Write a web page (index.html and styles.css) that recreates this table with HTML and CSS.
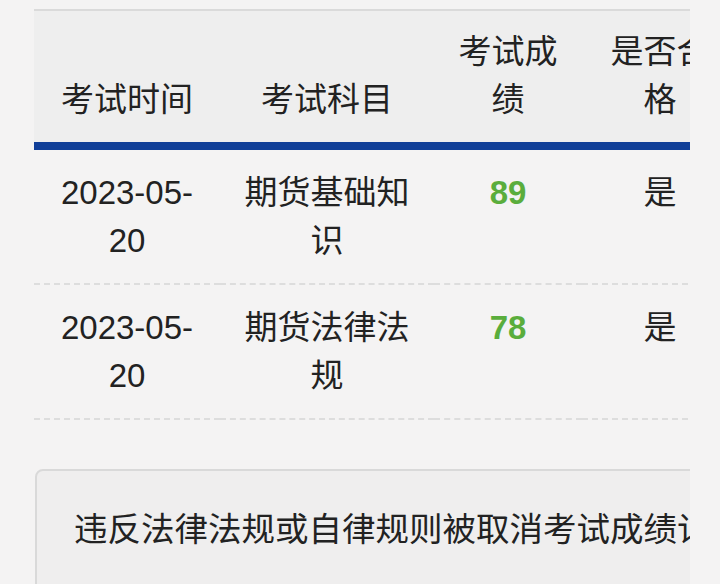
FILE: index.html
```html
<!DOCTYPE html>
<html lang="zh">
<head>
<meta charset="utf-8">
<link rel="stylesheet" href="styles.css">
</head>
<body>
<div class="wrap">
  <table class="scores">
    <colgroup>
      <col class="c1"><col class="c2"><col class="c3"><col class="c4">
    </colgroup>
    <thead>
      <tr>
        <th>考试时间</th>
        <th>考试科目</th>
        <th>考试成绩</th>
        <th>是否合格</th>
      </tr>
    </thead>
    <tbody>
      <tr>
        <td>2023-05-20</td>
        <td>期货基础知识</td>
        <td class="score">89</td>
        <td>是</td>
      </tr>
      <tr>
        <td>2023-05-20</td>
        <td>期货法律法规</td>
        <td class="score">78</td>
        <td>是</td>
      </tr>
    </tbody>
  </table>
  <div class="notice">违反法律法规或自律规则被取消考试成绩记录</div>
</div>
</body>
</html>
```
FILE: styles.css
```css
html, body {
  margin: 0;
  background: #f4f3f3;
}
body {
  font-family: "Liberation Sans", "Noto Sans CJK SC", sans-serif;
  color: #222222;
  font-size: 33px;
  line-height: 48px;
}
.wrap {
  margin-left: 34px;
  width: 656px;
  height: 584px;
  padding-top: 9px;
  box-sizing: border-box;
  overflow: hidden;
}
.scores {
  width: 704px;
  table-layout: fixed;
  border-collapse: collapse;
}
.c1 { width: 186px; }
.c2 { width: 214px; }
.c3 { width: 148px; }
.c4 { width: 156px; }
.scores thead tr {
  background: #eeeeee;
  border-top: 2px solid #dadada;
  border-bottom: 8px solid #113f98;
}
.scores th {
  font-weight: normal;
  padding: 17px 14px 18px;
  vertical-align: bottom;
  text-align: center;
}
.scores td {
  padding: 19px 14px 18px;
  vertical-align: top;
  text-align: center;
  border-bottom: 2px dashed #dddddd;
}
.scores td.score {
  color: #5aad3c;
  font-weight: bold;
}
.notice {
  margin-top: 49px;
  margin-left: 1px;
  width: 760px;
  height: 200px;
  box-sizing: border-box;
  background: #efeeee;
  border: 2px solid #d9d9d9;
  border-radius: 8px 0 0 0;
  padding: 35px 0 0 37px;
  font-size: 33.5px;
  white-space: nowrap;
}
```
